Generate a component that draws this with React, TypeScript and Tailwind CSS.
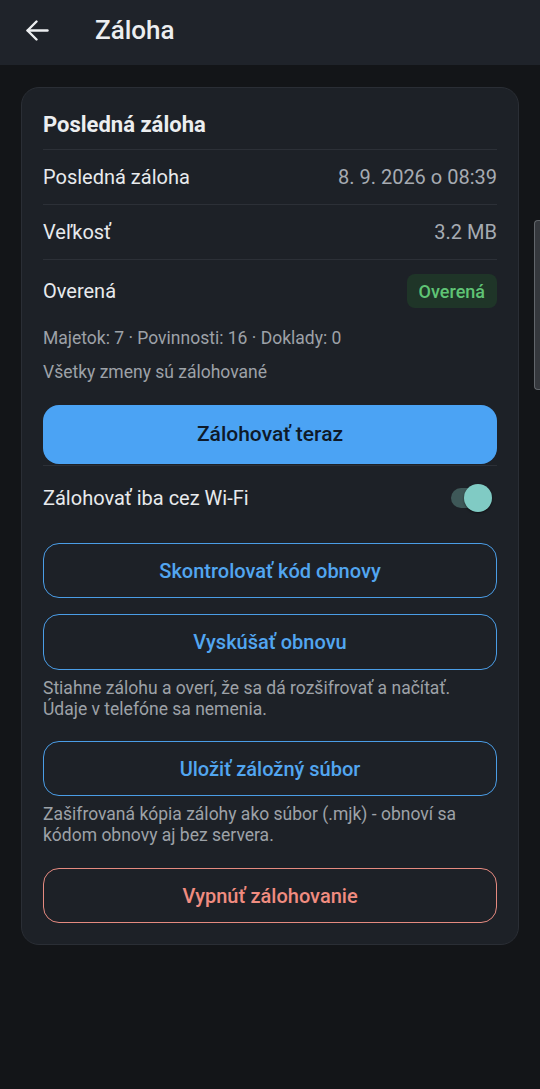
import React from 'react';

const font = { fontFamily: 'Roboto, "Noto Sans", sans-serif' };

// Info rows inside the card
const InfoRow: React.FC<{ label: string; value: string }> = ({ label, value }) => {
  return (
    <div className="h-[55px] flex items-center justify-between border-b border-[#2c3037]">
      <span className="text-[20px] text-[#e8eaed]">{label}</span>
      <span className="text-[20px] text-[#a6abb2]">{value}</span>
    </div>
  );
};

const OutlineButton: React.FC<{ label: string; danger?: boolean; className?: string }> = ({ label, danger, className }) => {
  return (
    <button
      className={`w-full h-[55px] rounded-[16px] border-[1.5px] bg-transparent text-[20px] font-medium ${
        danger ? 'border-[#e58a80] text-[#f08c80]' : 'border-[#4a9de6] text-[#52a6f0]'
      } ${className || ''}`}
    >
      {label}
    </button>
  );
};

const HelpText: React.FC<{ children: React.ReactNode }> = ({ children }) => {
  return <p className="mt-[8px] text-[17.5px] leading-[21px] text-[#9da2a8]">{children}</p>;
};

export default function App() {
  return (
    <div className="relative min-h-[1089px] w-[540px] bg-[#131518]" style={font}>
      {/* top bar */}
      <header className="h-[65px] pb-[5px] bg-[#1f232a] flex items-center">
        <button className="ml-[25px] w-[24px] h-[24px] flex items-center justify-center">
          <svg width="23" height="21" viewBox="0 0 23 21" fill="none" stroke="#eceef0" strokeWidth="2.4" strokeLinecap="round" strokeLinejoin="round">
            <path d="M10.5 1.5 1.5 10.5l9 9" />
            <path d="M1.8 10.5H21.5" />
          </svg>
        </button>
        <h1 className="ml-[46px] text-[26px] font-medium text-[#eceef0] leading-none">Záloha</h1>
      </header>

      <main className="px-[21px] pt-[22px]">
        <section className="rounded-[18px] bg-[#1d2127] border border-[#2a2e35] px-[21px] pt-[22px] pb-[21px]">
          <div className="pb-[9px] border-b border-[#2c3037]">
            <h2 className="text-[22px] leading-[30px] font-bold text-[#eceef0]">Posledná záloha</h2>
          </div>

          <InfoRow label="Posledná záloha" value="8. 9. 2026 o 08:39" />
          <InfoRow label="Veľkosť" value="3.2 MB" />

          <div className="h-[62px] flex items-center justify-between">
            <span className="text-[20px] text-[#e8eaed]">Overená</span>
            <span className="h-[34px] px-[12px] rounded-[8px] bg-[#1f3528] text-[#5fc475] text-[18px] font-medium flex items-center">
              Overená
            </span>
          </div>

          <p className="mt-[4px] text-[17.5px] leading-[24px] text-[#9da2a8]">Majetok: 7 · Povinnosti: 16 · Doklady: 0</p>
          <p className="mt-[10px] text-[17.5px] leading-[24px] text-[#9da2a8]">Všetky zmeny sú zálohované</p>

          <button className="mt-[21px] w-full h-[59px] rounded-[16px] bg-[#4ba3f4] text-[#0e1a29] text-[21px] font-medium">
            Zálohovať teraz
          </button>

          <div className="mt-[1px] h-[64px] border-t border-[#2c3037] flex items-center justify-between">
            <span className="text-[20px] text-[#e8eaed]">Zálohovať iba cez Wi-Fi</span>
            <div className="relative w-[41px] h-[28px] mr-[5px]">
              <div className="absolute left-0 top-[4px] w-[36px] h-[20px] rounded-full bg-[#3e5858]" />
              <div className="absolute right-0 top-0 w-[28px] h-[28px] rounded-full bg-[#80cbc4] shadow-[0_1px_2px_rgba(0,0,0,0.5)]" />
            </div>
          </div>

          <OutlineButton label="Skontrolovať kód obnovy" className="mt-[14px]" />
          <OutlineButton label="Vyskúšať obnovu" className="mt-[16px] h-[56px]" />
          <HelpText>
            Stiahne zálohu a overí, že sa dá rozšifrovať a načítať.
            <br />
            Údaje v telefóne sa nemenia.
          </HelpText>

          <OutlineButton label="Uložiť záložný súbor" className="mt-[21px]" />
          <HelpText>
            Zašifrovaná kópia zálohy ako súbor (.mjk) - obnoví sa
            <br />
            kódom obnovy aj bez servera.
          </HelpText>

          <OutlineButton label="Vypnúť zálohovanie" danger className="mt-[22px]" />
        </section>
      </main>

      {/* overlay scrollbar */}
      <div className="absolute right-0 top-[220px] w-[6px] h-[170px] rounded-l-[4px] bg-[#35383d] border border-r-0 border-[#62666b]" />
    </div>
  );
}
